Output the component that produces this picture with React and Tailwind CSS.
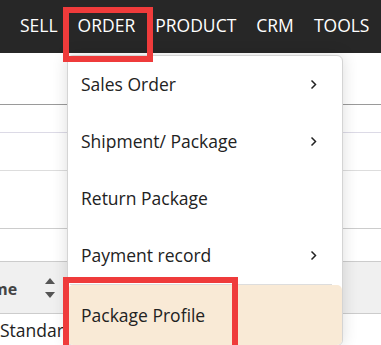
import React from 'react';

const navItems = ['SELL', 'ORDER', 'PRODUCT', 'CRM', 'TOOLS'];

const menuItems = [
  { label: 'Sales Order', sub: true },
  { label: 'Shipment/ Package', sub: true },
  { label: 'Return Package', sub: false },
  { label: 'Payment record', sub: true },
];

const Chevron = () => (
  <svg width="7" height="11" viewBox="0 0 7 11" fill="none">
    <polyline points="1.5,1.5 5.5,5.5 1.5,9.5" stroke="#222" strokeWidth="1.5" />
  </svg>
);

const App = () => {
  return (
    <div
      className="relative w-[381px] h-[345px] overflow-hidden bg-white text-[#222]"
      style={{ fontFamily: '"Open Sans", "Noto Sans", sans-serif' }}
    >
      {/* Top nav */}
      <div className="h-[53px] bg-[#272727] flex items-start pt-[11px] pl-[20px] gap-[20px]">
        {navItems.map((item) => (
          <span key={item} className="text-white text-[17.5px] leading-[28px]">
            {item}
          </span>
        ))}
      </div>

      {/* Page behind the menu */}
      <div className="h-[52px] border-b border-[#9a9a9a]" />
      <div className="h-[28px] border-b border-[#dcdae6]" />
      <div className="h-[38px] border-b border-[#dddddd]" />
      <div className="h-[58px] border-b border-[#cccccc]" />
      <div className="h-[32px]" />
      <div className="h-[53px] bg-[#f0f0f0] border-y border-[#cccccc] flex items-center overflow-hidden">
        <span className="ml-[-8px] text-[16px] font-bold text-[#444] leading-none pt-[2px]">me</span>
        <div className="ml-[28px] flex flex-col gap-[8px]">
          <div className="w-0 h-0 border-x-[5px] border-x-transparent border-b-[6px] border-b-[#555]" />
          <div className="w-0 h-0 border-x-[5px] border-x-transparent border-t-[6px] border-t-[#555]" />
        </div>
      </div>
      <div className="pt-[4px] text-[17.5px] leading-[24px]">Standard</div>

      {/* Dropdown */}
      <div className="absolute left-[67px] top-[55px] w-[276px] bg-white border border-[#d4d4d4] rounded-[6px] shadow-[0_0_16px_rgba(0,0,0,0.14)]">
        {menuItems.map((m) => (
          <div key={m.label} className="h-[57px] flex items-center justify-between pl-[13px] pr-[25px] text-[17.5px]">
            <span>{m.label}</span>
            {m.sub && <Chevron />}
          </div>
        ))}
        <div className="h-px bg-[#dddddd] ml-[2px] mr-[10px]" />
        <div className="h-[60px] flex items-center pl-[13px] bg-[#f9ead6] rounded-[5px] text-[17.5px]">
          Package Profile
        </div>
      </div>

      {/* Highlight boxes */}
      <div className="absolute left-[63px] top-[7px] w-[90px] h-[55px] border-[6px] border-[#ef3b3b]" />
      <div className="absolute left-[63px] top-[277px] w-[175px] h-[80px] border-[6px] border-[#ef3b3b]" />
    </div>
  );
};

export default App;
